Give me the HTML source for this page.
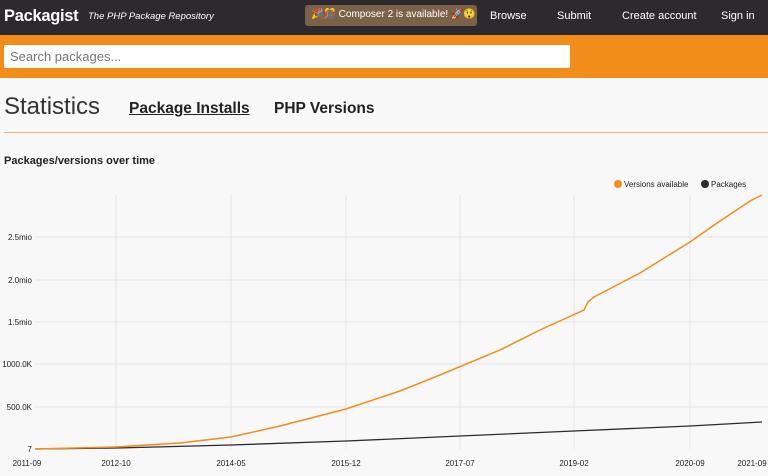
<!DOCTYPE html>
<html><head><meta charset="utf-8"><style>
*{margin:0;padding:0;box-sizing:border-box}
body{width:768px;height:476px;overflow:hidden;background:#f8f8f8;font-family:"Liberation Sans",sans-serif;color:#222;position:relative}
.top{position:absolute;left:0;top:0;width:768px;height:35px;background:#2c2a2e;color:#fff}
.logo{position:absolute;left:4px;top:7px;font-size:16.5px;font-weight:bold;letter-spacing:-0.3px}
.tag{position:absolute;left:88px;top:11px;font-size:9.5px;font-style:italic;white-space:nowrap}
.badge{position:absolute;left:305px;top:5px;width:172px;height:21px;background:#7a6147;border-radius:3px;font-size:10px;padding:4px 0 0 6px;white-space:nowrap;overflow:hidden}
.nav{position:absolute;top:10px;font-size:11px;white-space:nowrap}
.bar{position:absolute;left:0;top:35px;width:768px;height:43px;background:#f28d1a}
.search{position:absolute;left:4px;top:45px;width:566px;height:23px;background:#fff;border-radius:2px;font-size:13px;color:#777;padding:4px 0 0 6px}
h1{position:absolute;left:4px;top:93px;font-size:24px;font-weight:normal;color:#333}
.t{position:absolute;top:100px;font-size:15.5px;font-weight:bold;color:#222;white-space:nowrap}
.line{position:absolute;left:4px;top:132px;width:764px;height:1px;background:#f2b06a}
.sub{position:absolute;left:4px;top:155px;font-size:11px;font-weight:bold}
svg{position:absolute;left:0;top:170px}
</style></head><body>
<div class="top">
<div class="logo">Packagist</div><div class="tag">The PHP Package Repository</div>
<div class="badge">🎉🎊 Composer 2 is available! 🚀😲</div>
<div class="nav" style="left:490px">Browse</div>
<div class="nav" style="left:557px">Submit</div>
<div class="nav" style="left:622px">Create account</div>
<div class="nav" style="left:721px">Sign in</div>
</div>
<div class="bar"></div>
<div class="search">Search packages...</div>
<h1>Statistics</h1>
<div class="t" style="left:129px;text-decoration:underline">Package Installs</div>
<div class="t" style="left:274px">PHP Versions</div>
<div class="line"></div>
<div class="sub">Packages/versions over time</div>
<svg width="768" height="306" viewBox="0 170 768 306" font-family="Liberation Sans, sans-serif" font-size="8">
<g stroke="#e4e4e4" stroke-width="1">
<line x1="116" y1="195" x2="116" y2="449"/><line x1="231" y1="195" x2="231" y2="449"/><line x1="346" y1="195" x2="346" y2="449"/><line x1="460" y1="195" x2="460" y2="449"/><line x1="574" y1="195" x2="574" y2="449"/><line x1="690" y1="195" x2="690" y2="449"/>
<line x1="35" y1="237" x2="768" y2="237"/><line x1="35" y1="280" x2="768" y2="280"/><line x1="35" y1="322" x2="768" y2="322"/><line x1="35" y1="364" x2="768" y2="364"/><line x1="35" y1="407" x2="768" y2="407"/>
</g>
<g fill="#222" text-anchor="end">
<text x="32" y="240">2.5mio</text><text x="32" y="283">2.0mio</text><text x="32" y="325">1.5mio</text><text x="32" y="367">1000.0K</text><text x="32" y="410">500.0K</text><text x="32" y="452">7</text>
</g>
<g fill="#222" text-anchor="middle">
<text x="27" y="466">2011-09</text><text x="116" y="466">2012-10</text><text x="231" y="466">2014-05</text><text x="346" y="466">2015-12</text><text x="460" y="466">2017-07</text><text x="574" y="466">2019-02</text><text x="690" y="466">2020-09</text><text x="752" y="466">2021-09</text>
</g>
<circle cx="618" cy="184" r="4" fill="#f28d1a"/><text x="624" y="187" fill="#222" font-size="8">Versions available</text>
<circle cx="705" cy="184" r="4" fill="#2c2a2e"/><text x="711" y="187" fill="#222" font-size="8">Packages</text>
<polyline fill="none" stroke="#2c2a2e" stroke-width="1.3" points="35,449 116,448 231,445 346,441 460,436 574,431 690,426 762,422"/>
<polyline fill="none" stroke="#f28d1a" stroke-width="1.5" points="35,449 116,447 180,443 231,437 280,426 346,409 400,391 440,375 500,350 540,330 584,310 588,302 594,297 640,273 690,242 720,221 750,201 762,195"/>
</svg>
</body></html>
